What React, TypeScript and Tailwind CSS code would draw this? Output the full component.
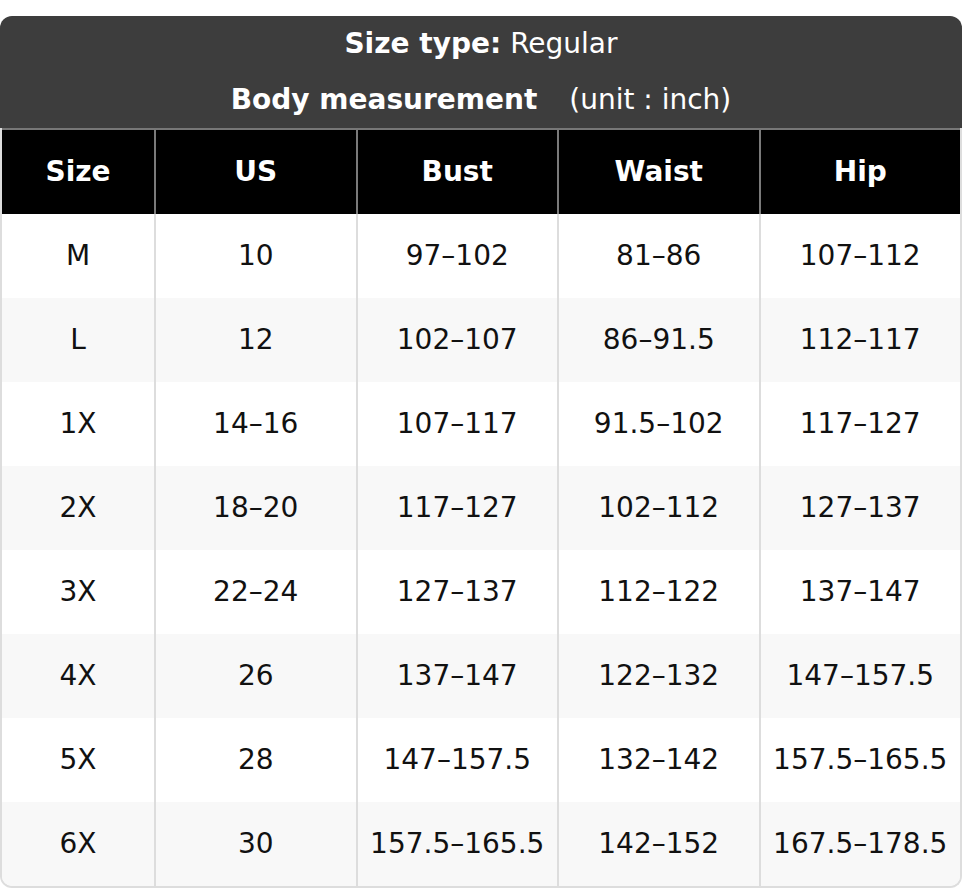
import React from "react";

const columns = ["Size", "US", "Bust", "Waist", "Hip"];

const rows = [
  ["M", "10", "97–102", "81–86", "107–112"],
  ["L", "12", "102–107", "86–91.5", "112–117"],
  ["1X", "14–16", "107–117", "91.5–102", "117–127"],
  ["2X", "18–20", "117–127", "102–112", "127–137"],
  ["3X", "22–24", "127–137", "112–122", "137–147"],
  ["4X", "26", "137–147", "122–132", "147–157.5"],
  ["5X", "28", "147–157.5", "132–142", "157.5–165.5"],
  ["6X", "30", "157.5–165.5", "142–152", "167.5–178.5"],
];

export default function App() {
  return (
    <div className="w-[962px] bg-white pt-[16px] font-['DejaVu_Sans',sans-serif] text-[28px]">
      <div className="rounded-t-[12px] bg-[#3d3d3d] text-white">
        <div className="flex h-[55px] items-center justify-center pt-[1px]">
          <span className="font-bold">Size type:</span>
          <span className="ml-[9px]">Regular</span>
        </div>
        <div className="flex h-[57px] items-center justify-center">
          <span className="font-bold">Body measurement</span>
          <span className="ml-[32px]">(unit : inch)</span>
        </div>
      </div>
      <div className="overflow-hidden rounded-b-[12px] border-x-2 border-b-2 border-[#dddddd]">
        <div className="grid grid-cols-[152px_1fr_1fr_1fr_1fr] border-t-2 border-[#777777] bg-black font-bold text-white">
          {columns.map((c, i) => (
            <div
              key={c}
              className={
                "flex h-[84px] items-center justify-center" +
                (i > 0 ? " border-l-2 border-[#7a7a7a]" : "")
              }
            >
              {c}
            </div>
          ))}
        </div>
        {rows.map((r, ri) => (
          <div
            key={r[0]}
            className={
              "grid grid-cols-[152px_1fr_1fr_1fr_1fr] text-[#111111] " +
              (ri % 2 === 1 ? "bg-[#f8f8f8]" : "bg-white")
            }
          >
            {r.map((cell, i) => (
              <div
                key={i}
                className={
                  "flex h-[84px] items-center justify-center" +
                  (i > 0 ? " border-l-2 border-[#dddddd]" : "")
                }
              >
                {cell}
              </div>
            ))}
          </div>
        ))}
      </div>
    </div>
  );
}
